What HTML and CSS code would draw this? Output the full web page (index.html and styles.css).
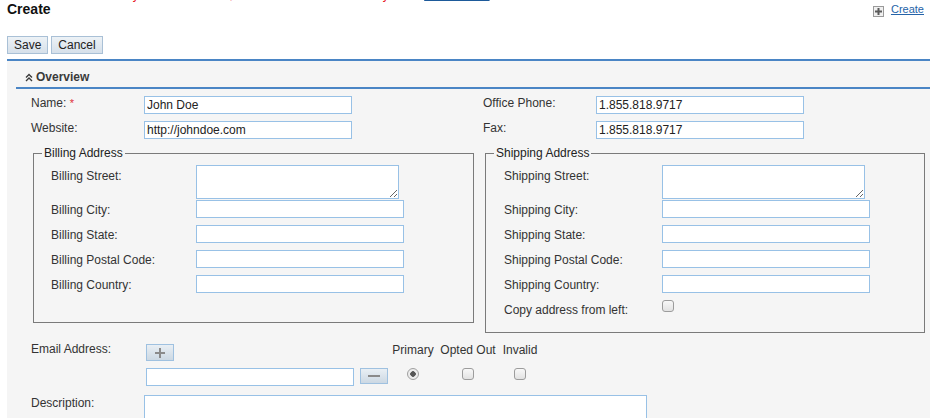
FILE: index.html
```html
<!DOCTYPE html>
<html lang="en">
<head>
    <meta charset="UTF-8">
    <meta name="viewport" content="width=device-width, initial-scale=1.0">
    <title>Create Account</title>
    <link rel="stylesheet" href="styles.css">
</head>
<body>
    <div class="notice">
        <div class="notice-line"><span class="notice-text">Invalid entry: the Name value, must be rechecked manually in the</span> <a href="#" class="notice-link">Account List</a></div>
    </div>

    <div class="page-head">
        <h1>Create</h1>
        <a href="#" class="create-link">
            <span class="plus-box">
                <svg width="9" height="9" viewBox="0 0 9 9"><path d="M4.5 1v7M1 4.5h7" stroke="#5a5a5a" stroke-width="2"/></svg>
            </span>
            <span class="create-text">Create</span>
        </a>
    </div>

    <div class="actions">
        <button class="btn">Save</button>
        <button class="btn">Cancel</button>
    </div>

    <div class="panel">
        <div class="panel-head">
            <svg class="chevrons" width="8" height="9" viewBox="0 0 8 9">
                <path d="M1 4.5L4 1.5L7 4.5M1 8L4 5L7 8" fill="none" stroke="#3a3a3a" stroke-width="1.4"/>
            </svg>
            Overview
        </div>

        <div class="panel-body">
            <div class="fields">
                <div class="field-col">
                    <div class="row">
                        <label>Name: <span class="req">*</span></label>
                        <input type="text" class="txt" value="John Doe">
                    </div>
                    <div class="row">
                        <label>Website:</label>
                        <input type="text" class="txt" value="http://johndoe.com">
                    </div>
                </div>
                <div class="field-col">
                    <div class="row">
                        <label>Office Phone:</label>
                        <input type="text" class="txt" value="1.855.818.9717">
                    </div>
                    <div class="row">
                        <label>Fax:</label>
                        <input type="text" class="txt" value="1.855.818.9717">
                    </div>
                </div>
            </div>

            <div class="addresses">
                <fieldset class="fs fs-bill">
                    <legend>Billing Address</legend>
                    <div class="addr-row tall">
                        <label>Billing Street:</label>
                        <textarea class="area"></textarea>
                    </div>
                    <div class="addr-row">
                        <label>Billing City:</label>
                        <input type="text" class="txt">
                    </div>
                    <div class="addr-row">
                        <label>Billing State:</label>
                        <input type="text" class="txt">
                    </div>
                    <div class="addr-row">
                        <label>Billing Postal Code:</label>
                        <input type="text" class="txt">
                    </div>
                    <div class="addr-row">
                        <label>Billing Country:</label>
                        <input type="text" class="txt">
                    </div>
                </fieldset>

                <fieldset class="fs fs-ship">
                    <legend>Shipping Address</legend>
                    <div class="addr-row tall">
                        <label>Shipping Street:</label>
                        <textarea class="area"></textarea>
                    </div>
                    <div class="addr-row">
                        <label>Shipping City:</label>
                        <input type="text" class="txt">
                    </div>
                    <div class="addr-row">
                        <label>Shipping State:</label>
                        <input type="text" class="txt">
                    </div>
                    <div class="addr-row">
                        <label>Shipping Postal Code:</label>
                        <input type="text" class="txt">
                    </div>
                    <div class="addr-row">
                        <label>Shipping Country:</label>
                        <input type="text" class="txt">
                    </div>
                    <div class="addr-row">
                        <label>Copy address from left:</label>
                        <input type="checkbox" class="check">
                    </div>
                </fieldset>
            </div>

            <div class="email">
                <label class="email-label">Email Address:</label>
                <div><button class="icon-btn plus-btn"><svg width="12" height="12" viewBox="0 0 12 12"><path d="M6 1v10M1 6h10" stroke="#8a8a8a" stroke-width="2"/></svg></button></div>
                <div></div>
                <div class="flag-head">Primary</div>
                <div class="flag-head">Opted Out</div>
                <div class="flag-head">Invalid</div>

                <div></div>
                <div><input type="text" class="txt"></div>
                <div><button class="icon-btn minus-btn"><svg width="12" height="4" viewBox="0 0 12 4"><path d="M0 2h12" stroke="#8a8a8a" stroke-width="2"/></svg></button></div>
                <div class="flag-cell"><input type="radio" class="radio" checked></div>
                <div class="flag-cell"><input type="checkbox" class="check"></div>
                <div class="flag-cell"><input type="checkbox" class="check"></div>
            </div>

            <div class="desc-row">
                <label>Description:</label>
                <textarea class="area desc-area"></textarea>
            </div>
        </div>
    </div>
</body>
</html>
```

FILE: styles.css
```css
* {
    box-sizing: border-box;
}
body {
    margin: 0;
    font-family: "Liberation Sans", Arial, sans-serif;
    font-size: 12px;
    color: #333;
    background: #fff;
    overflow: hidden;
}
.notice {
    height: 2px;
    overflow: hidden;
    padding-left: 74px;
}
.notice-line {
    margin-top: -12px;
    line-height: 14px;
    white-space: nowrap;
}
.notice-text {
    color: #e8101a;
}
.notice-link {
    color: #1d5a9a;
}
.page-head {
    display: flex;
    justify-content: space-between;
    align-items: flex-start;
    padding: 0 6px 0 7px;
    height: 14px;
}
.page-head h1 {
    margin: 0;
    font-size: 14px;
    line-height: 14px;
    font-weight: bold;
    color: #111;
}
.create-link {
    display: flex;
    align-items: flex-start;
    color: #2563a8;
    line-height: 14px;
}
.plus-box {
    width: 11px;
    height: 11px;
    margin-top: 4px;
    margin-right: 7px;
    border: 1px solid #9a9a9a;
    background: #f0f0f0;
    display: flex;
    align-items: center;
    justify-content: center;
}
.create-text {
    font-size: 11px;
    text-decoration: underline;
}
.actions {
    display: flex;
    gap: 3px;
    margin: 20px 0 0 7px;
}
.btn {
    height: 18px;
    padding: 0 6px;
    font-family: inherit;
    font-size: 12px;
    line-height: 16px;
    color: #222;
    border: 1px solid #a9c0d6;
    background: linear-gradient(#edf2f6, #d6e0ea);
    border-radius: 0;
}
.panel {
    margin: 5px 0 0 7px;
    border-top: 2px solid #4a85c5;
    background: #f5f5f5;
    height: 400px;
}
.panel-head {
    margin-left: 9px;
    padding: 8px 0 2px 9px;
    line-height: 16px;
    font-weight: bold;
    color: #3a3a3a;
    border-bottom: 2px solid #4a85c5;
    display: flex;
    align-items: center;
    gap: 3px;
}
.panel-body {
    padding: 7px 0 0 24px;
}
.fields {
    display: grid;
    grid-template-columns: 452px 1fr;
}
.row {
    display: flex;
    height: 25px;
}
.row label {
    width: 113px;
    line-height: 14px;
}
.req {
    color: #e0303a;
    font-size: 11px;
    vertical-align: top;
}
.txt {
    width: 208px;
    height: 18px;
    margin: 0;
    padding: 0 2px;
    border: 1px solid #98c1e6;
    background: #fff;
    font-family: inherit;
    font-size: 12px;
    color: #222;
    border-radius: 0;
    outline: none;
}
.area {
    width: 203px;
    height: 34px;
    margin: 0;
    border: 1px solid #98c1e6;
    background: #fff;
    border-radius: 0;
    font-family: inherit;
    font-size: 12px;
}
.addresses {
    display: flex;
    align-items: flex-start;
    gap: 11px;
    margin-left: 2px;
}
.fs {
    margin: 0;
    padding: 5px 8px 7px;
    border: 1px solid #7a7a7a;
    min-width: 0;
}
.fs legend {
    padding: 0 2px;
    line-height: 14px;
    color: #222;
}
.fs-bill {
    width: 441px;
    padding-bottom: 22px;
}
.fs-ship {
    width: 440px;
}
.addr-row {
    display: flex;
    height: 25px;
    padding-left: 9px;
}
.addr-row.tall {
    height: 35px;
}
.addr-row label {
    width: 145px;
    padding-top: 3px;
    line-height: 14px;
}
.addr-row.tall label {
    padding-top: 4px;
}
.fs-ship .addr-row {
    padding-left: 10px;
}
.fs-ship .addr-row label {
    width: 158px;
}
.check {
    appearance: none;
    width: 12px;
    height: 12px;
    margin: 0;
    border: 1px solid #9c9c9c;
    border-radius: 3px;
    background: linear-gradient(#f8f8f8, #e2e2e2);
}
.radio {
    appearance: none;
    width: 12px;
    height: 12px;
    margin: 0;
    border: 1px solid #a0a0a0;
    border-radius: 50%;
    background: radial-gradient(circle, #555 0 2.5px, #ececec 3px);
}
.email {
    display: grid;
    grid-template-columns: 115px 214px 30px 46px 64px 40px;
    grid-template-rows: 26px 18px;
    margin-top: 9px;
}
.email-label {
    line-height: 14px;
}
.icon-btn {
    display: flex;
    align-items: center;
    justify-content: center;
    padding: 0;
    border: 1px solid #9fc1e0;
    background: linear-gradient(#e9eff4, #ccd8e3);
    border-radius: 0;
}
.plus-btn {
    width: 28px;
    height: 17px;
    margin-top: 2px;
}
.minus-btn {
    width: 28px;
    height: 16px;
}
.flag-head {
    text-align: center;
    line-height: 14px;
    padding-top: 1px;
    white-space: nowrap;
}
.flag-cell {
    display: flex;
    justify-content: center;
}
.desc-row {
    display: flex;
    margin-top: 9px;
}
.desc-row label {
    width: 113px;
    padding-top: 1px;
    line-height: 14px;
}
.desc-area {
    width: 503px;
    height: 40px;
}
```
